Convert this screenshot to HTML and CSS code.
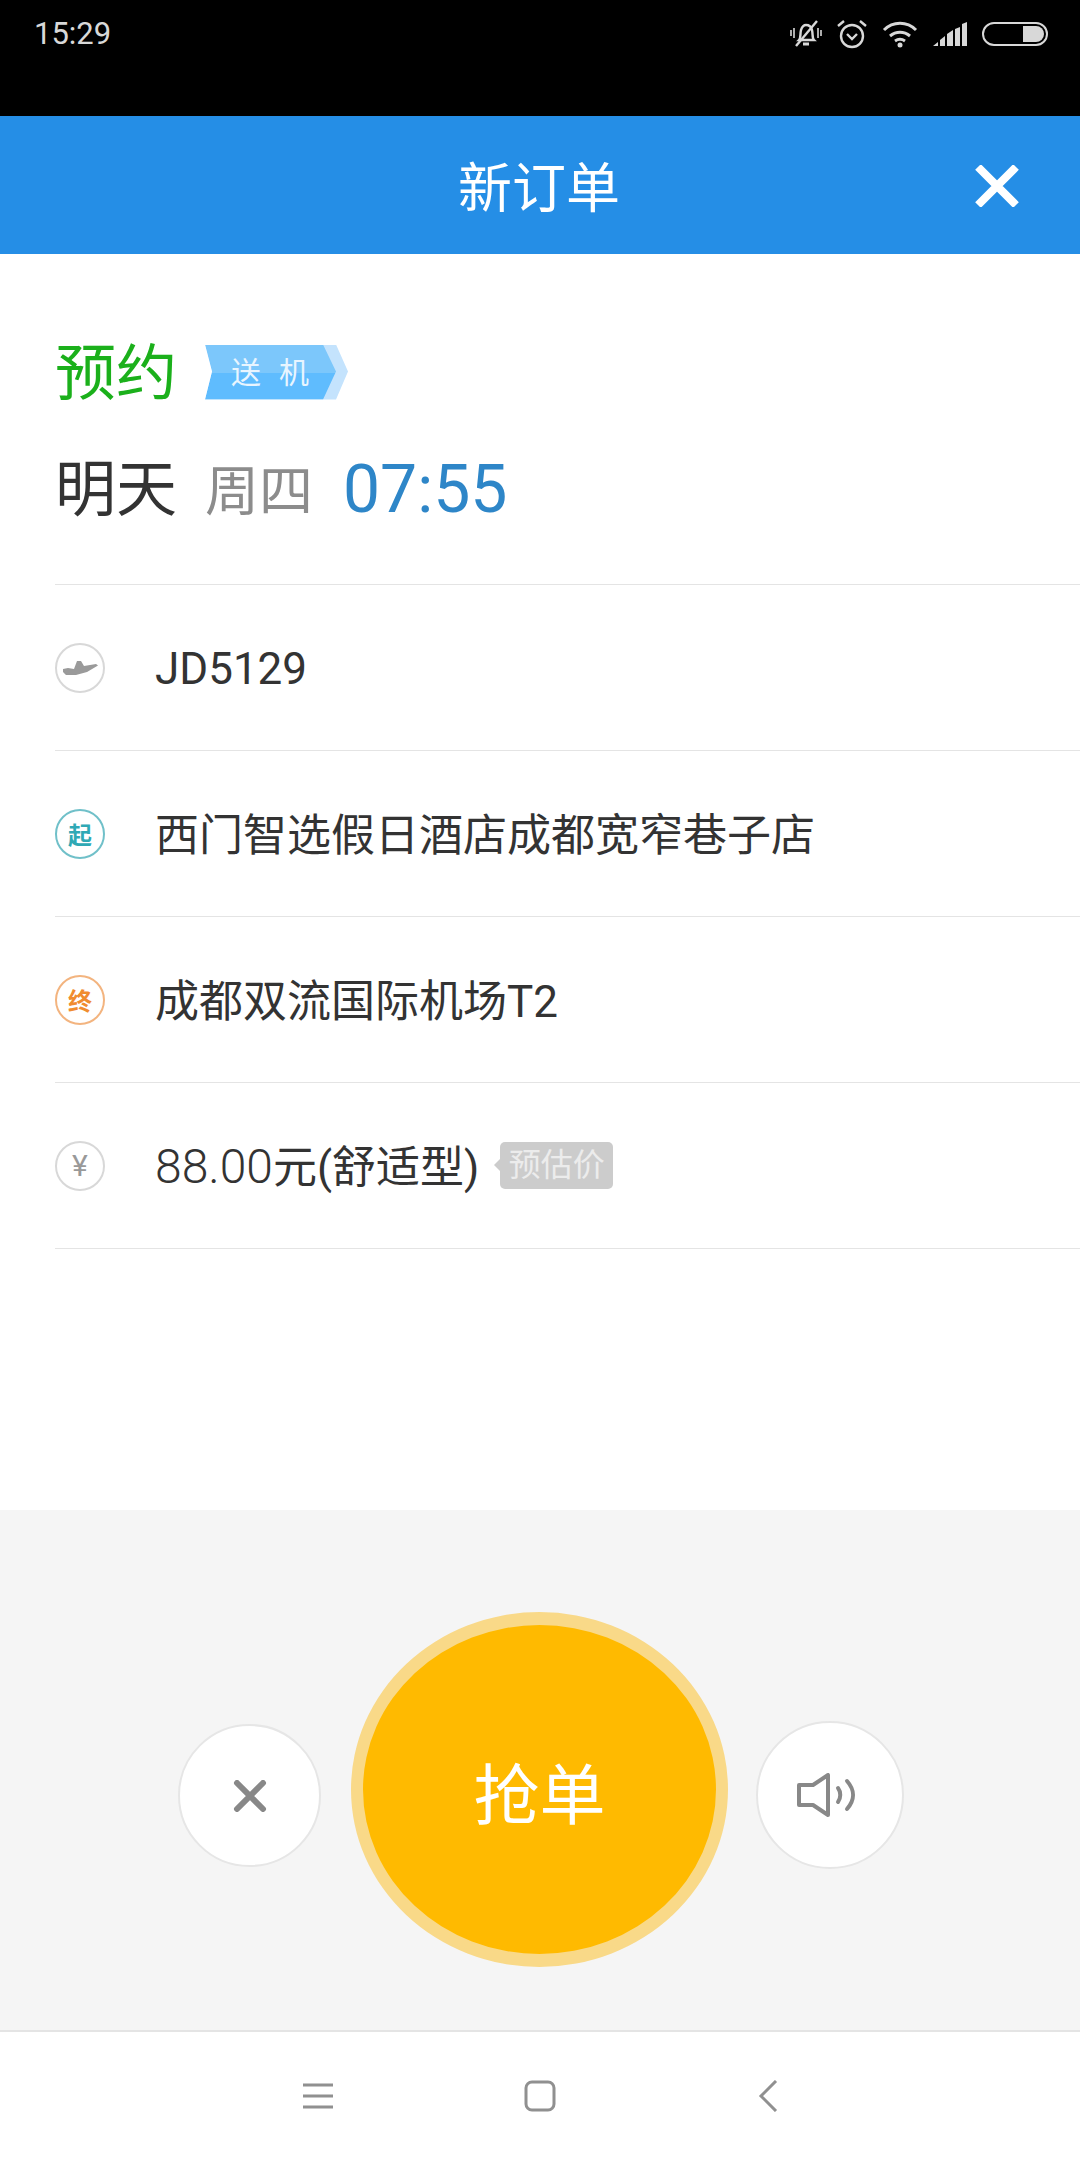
FILE: index.html
```html
<!DOCTYPE html>
<html lang="zh-CN">
  <head>
    <meta charset="UTF-8" />
    <meta name="viewport" content="width=device-width, initial-scale=1.0" />
    <title>新订单</title>
    <link rel="stylesheet" href="styles.css">
  </head>
  <body>
    <div class="page">
      <div class="status-bar">
        <span class="clock">15:29</span>
        <div class="status-icons">
          <svg class="icon-bell" viewBox="0 0 32 30" fill="none" stroke="#d8d8d8" stroke-width="2.4">
            <path d="M9 21c2-2 1-6 2-10 1-3 3-5 5-5s5 1 6 5c1 4 0 8 2 10z" />
            <path d="M13 25h6" stroke-width="3" />
            <path d="M6 27L27 2" />
            <path d="M1 11v6M4 9v10M28 9v10M31 11v6" stroke-width="1.6" />
          </svg>
          <svg class="icon-alarm" viewBox="0 0 30 30" fill="none" stroke="#d8d8d8" stroke-width="2.4">
            <circle cx="15" cy="17" r="11" />
            <path d="M10 15l5 5 5-5" />
            <path d="M1 7l6-5M29 7l-6-5" />
          </svg>
          <svg class="icon-wifi" viewBox="0 0 36 28" fill="none" stroke="#d8d8d8" stroke-width="3">
            <path d="M2 10c9-9 23-9 32 0" />
            <path d="M8 16c6-5 14-5 20 0" />
            <path d="M13 21c3-2 7-2 10 0" />
            <circle cx="18" cy="25" r="2.5" fill="#d8d8d8" stroke="none" />
          </svg>
          <svg class="icon-signal" viewBox="0 0 34 24" fill="#d8d8d8">
            <path d="M0 24l5-4v4zM7 18l5-4v10H7zM14 12l6-4v16h-6zM22 7l5-2v19h-5zM29 2l5-2v24h-5z" />
          </svg>
          <svg class="icon-battery" viewBox="0 0 66 24">
            <rect x="1" y="1" width="64" height="22" rx="11" fill="none" stroke="#d8d8d8" stroke-width="2" />
            <path d="M41 4h13a8 8 0 0 1 0 16H41z" fill="#d8d8d8" />
          </svg>
        </div>
      </div>

      <div class="header">
        <span class="header-title">新订单</span>
        <svg class="header-close" viewBox="0 0 44 42" stroke="#fff" stroke-width="8">
          <path d="M3 2l38 38M41 2L3 40" />
        </svg>
      </div>

      <div class="content">
        <div class="summary">
          <div class="summary-line">
            <span class="order-type">预约</span>
            <div class="tag"><div class="tag-body">送机</div></div>
          </div>
          <div class="summary-line">
            <span class="day">明天</span>
            <span class="weekday">周四</span>
            <span class="time">07:55</span>
          </div>
        </div>

        <ul class="rows">
          <li class="row">
            <span class="badge badge-grey">
              <svg class="icon-plane" viewBox="0 0 36 16" fill="#9a9a9a">
                <path d="M1 9l5-1 6 1 3-8h4l3 5 12-2 2 1.500-11 6.500-11 3H4l-3-3z" />
              </svg>
            </span>
            <span class="row-text">JD5129</span>
          </li>
          <li class="row">
            <span class="badge badge-teal">起</span>
            <span class="row-text row-text-cjk">西门智选假日酒店成都宽窄巷子店</span>
          </li>
          <li class="row">
            <span class="badge badge-orange">终</span>
            <span class="row-text row-text-cjk">成都双流国际机场T2</span>
          </li>
          <li class="row">
            <span class="badge badge-grey badge-yen">¥</span>
            <span class="row-text row-text-cjk"><span class="price">88.00</span>元(舒适型)</span>
            <span class="estimate">预估价</span>
          </li>
        </ul>
      </div>

      <div class="actions">
        <div class="round-btn btn-dismiss">
          <svg class="icon-x" viewBox="0 0 34 32" stroke="#888" stroke-width="6" stroke-linecap="round">
            <path d="M4 3l26 26M30 3L4 29" />
          </svg>
        </div>
        <div class="grab-btn">抢单</div>
        <div class="round-btn btn-sound">
          <svg class="icon-speaker" viewBox="0 0 60 44" fill="none" stroke="#888">
            <path d="M2 12h14L31 2v40L16 32H2z" stroke-width="4" stroke-linejoin="round" />
            <path d="M41 15c3 4 3 10 0 14M50 8c8 9 8 19 0 28" stroke-width="4" stroke-linecap="round" />
          </svg>
        </div>
      </div>

      <div class="nav-bar">
        <svg class="icon-menu" viewBox="0 0 30 26" stroke="#909090" stroke-width="3">
          <path d="M0 2h30M0 13h30M0 24h30" />
        </svg>
        <svg class="icon-home" viewBox="0 0 32 32" fill="none" stroke="#909090" stroke-width="3">
          <rect x="2" y="2" width="28" height="28" rx="6" />
        </svg>
        <svg class="icon-back" viewBox="0 0 20 32" fill="none" stroke="#909090" stroke-width="3">
          <path d="M18 1L3 16l15 15" />
        </svg>
      </div>
    </div>
  </body>
</html>
```

FILE: styles.css
```css
body {
    margin: 0;
    font-family: Roboto, "Noto Sans CJK SC", sans-serif;
    background-color: #fff;
}

.page {
    width: 1080px;
    height: 2160px;
    display: flex;
    flex-direction: column;
    overflow: hidden;
}

/* status bar */
.status-bar {
    height: 116px;
    flex-shrink: 0;
    box-sizing: border-box;
    padding: 16px 32px 0 34px;
    display: flex;
    justify-content: space-between;
    align-items: flex-start;
    background-color: #000;
}

.clock {
    font-size: 31px;
    line-height: 36px;
    color: #d8d8d8;
}

.status-icons {
    display: flex;
    align-items: center;
    gap: 15px;
    height: 36px;
}

.icon-bell { width: 32px; height: 30px; }
.icon-alarm { width: 30px; height: 30px; }
.icon-wifi { width: 36px; height: 28px; }
.icon-signal { width: 34px; height: 24px; }
.icon-battery { width: 66px; height: 24px; }

/* header */
.header {
    height: 138px;
    flex-shrink: 0;
    box-sizing: border-box;
    padding: 0 61px 0 458px;
    display: flex;
    justify-content: space-between;
    align-items: center;
    background-color: #258ee6;
}

.header-title {
    margin-bottom: 2px;
    font-size: 54px;
    color: #fff;
}

.header-close {
    width: 44px;
    height: 42px;
    margin-top: 2px;
}

/* order details */
.content {
    flex: 1;
    background-color: #fff;
}

.summary {
    height: 330px;
    box-sizing: border-box;
    padding: 75px 0 0 55px;
    display: flex;
    flex-direction: column;
    gap: 30px;
}

.summary-line {
    height: 86px;
    display: flex;
    align-items: center;
}

.order-type {
    margin-bottom: 8px;
    font-size: 61px;
    color: #1bb01b;
}

.tag {
    width: 143px;
    height: 55px;
    margin-left: 28px;
    background-color: #c4e3fd;
    clip-path: polygon(0 0, 131px 0, 143px 27px, 131px 55px, 0 55px, 7px 27px);
}

.tag-body {
    width: 131px;
    height: 55px;
    box-sizing: border-box;
    padding-left: 26px;
    font-size: 30px;
    line-height: 55px;
    letter-spacing: 18px;
    white-space: nowrap;
    color: #e8f5ff;
    background: linear-gradient(#7cc7fb 50%, #5fbcfe 50%);
    clip-path: polygon(0 0, 118px 0, 131px 27px, 118px 55px, 0 55px, 7px 27px);
}

.day {
    margin-bottom: 8px;
    font-size: 61px;
    color: #333;
}

.weekday {
    margin-left: 28px;
    margin-bottom: 2px;
    font-size: 54px;
    color: #8c8c8c;
}

.time {
    margin-left: 30px;
    margin-top: 2px;
    font-size: 66px;
    color: #2e86c8;
}

.rows {
    list-style: none;
    margin: 0 0 0 55px;
    padding: 0;
    border-top: 1px solid #e4e4e4;
}

.row {
    height: 166px;
    box-sizing: border-box;
    border-bottom: 1px solid #e4e4e4;
    display: flex;
    align-items: center;
}

.badge {
    width: 50px;
    height: 50px;
    flex-shrink: 0;
    box-sizing: border-box;
    border-radius: 50%;
    border: 2px solid #d8d8d8;
    display: flex;
    justify-content: center;
    align-items: center;
    font-size: 24px;
    font-weight: bold;
    color: #999;
}

.badge-teal {
    border-color: #70c0c9;
    color: #2fa9b5;
}

.badge-orange {
    border-color: #f3b47f;
    color: #f08c30;
}

.badge-yen {
    font-size: 30px;
    font-weight: 400;
}

.icon-plane {
    width: 36px;
    height: 16px;
}

.row-text {
    margin-left: 50px;
    margin-top: 2px;
    font-size: 44px;
    color: #333;
    white-space: nowrap;
}

.row-text-cjk {
    margin-top: 0;
    margin-bottom: 4px;
}

.price {
    font-size: 48px;
    font-weight: 300;
}

.estimate {
    position: relative;
    margin-left: 21px;
    width: 113px;
    height: 47px;
    border-radius: 5px;
    text-align: center;
    font-size: 32px;
    line-height: 47px;
    color: #ececec;
    background-color: #ccc;
}

.estimate::before {
    content: "";
    position: absolute;
    left: -6px;
    top: 17px;
    border-style: solid;
    border-width: 6px 6px 6px 0;
    border-color: transparent #ccc transparent transparent;
}

/* bottom actions */
.actions {
    height: 520px;
    flex-shrink: 0;
    box-sizing: border-box;
    padding: 102px 0 0 2px;
    display: flex;
    justify-content: center;
    align-items: flex-start;
    gap: 30px;
    background-color: #f5f5f5;
}

.grab-btn {
    width: 377px;
    height: 355px;
    box-sizing: border-box;
    border: solid #f9d988;
    border-width: 13px 12px;
    border-radius: 50%;
    display: flex;
    justify-content: center;
    align-items: center;
    font-size: 66px;
    color: #fff;
    background-color: #ffba00;
}

.round-btn {
    box-sizing: border-box;
    border-radius: 50%;
    border: 2px solid #e6e6e6;
    background-color: #fff;
    display: flex;
    justify-content: center;
    align-items: center;
}

.btn-dismiss {
    width: 143px;
    height: 143px;
    margin-top: 112px;
}

.btn-sound {
    width: 148px;
    height: 148px;
    margin-top: 109px;
    margin-left: -2px;
}

.icon-x {
    width: 34px;
    height: 32px;
}

.icon-speaker {
    width: 60px;
    height: 44px;
    margin-right: 7px;
}

/* android nav */
.nav-bar {
    height: 130px;
    flex-shrink: 0;
    box-sizing: border-box;
    border-top: 2px solid #e4e4e4;
    padding: 0 0 0 303px;
    display: flex;
    align-items: center;
    background-color: #fff;
}

.icon-menu { width: 30px; height: 26px; }
.icon-home { width: 32px; height: 32px; margin-left: 191px; }
.icon-back { width: 20px; height: 32px; margin-left: 202px; }
```
